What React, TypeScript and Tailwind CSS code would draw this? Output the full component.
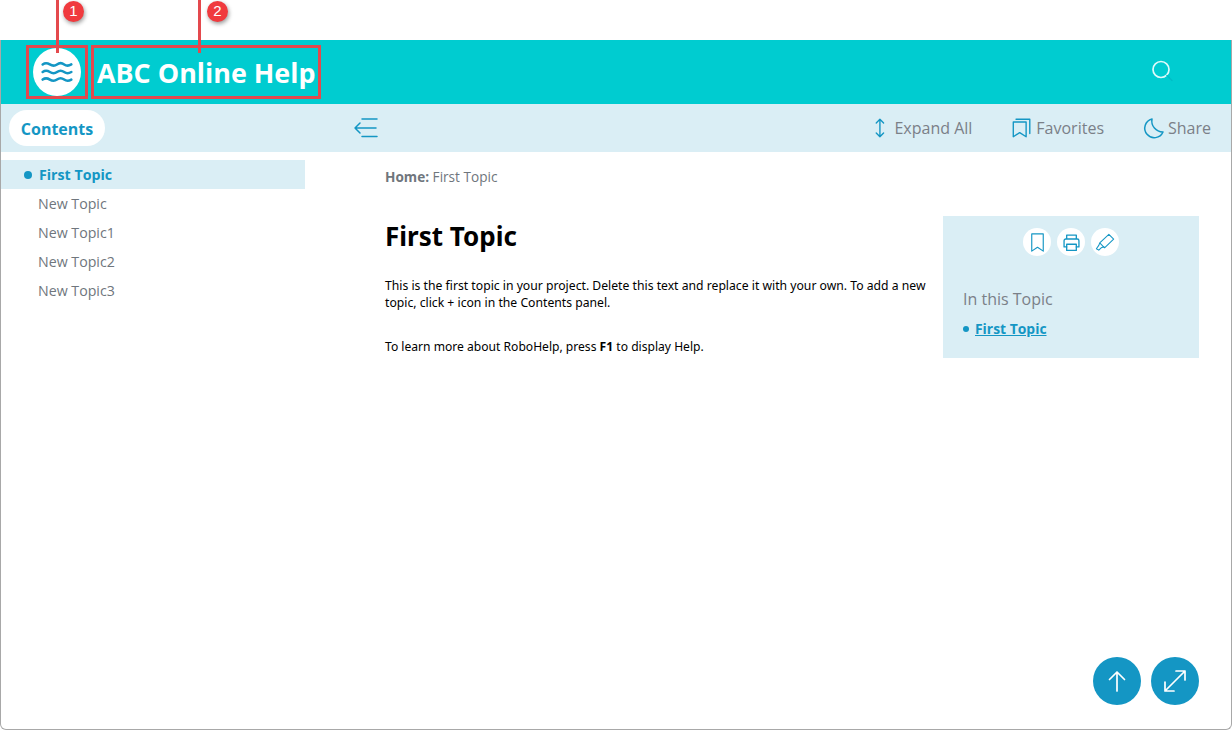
import React from "react";

const Blue = "#1496c4";

function Waves() {
  const d = (y: number) => `M2 ${y}c3-2.2 5-2.2 8.500 0s5.500 2.200 8.500 0 5.500-2.200 8.500 0 5 2.200 8.500 0`;
  return (
    <svg width="32" height="24" viewBox="0 0 38 28" fill="none" stroke={Blue} strokeWidth="3" strokeLinecap="round">
      <path d={d(5)} />
      <path d={d(14)} />
      <path d={d(23)} />
    </svg>
  );
}

function Stroke({ size, children, color = Blue, sw = 1.5, vb = 24 }: { size: number; children: React.ReactNode; color?: string; sw?: number; vb?: number }) {
  return (
    <svg width={size} height={size} viewBox={`0 0 ${vb} ${vb}`} fill="none" stroke={color} strokeWidth={sw} strokeLinecap="round" strokeLinejoin="round">
      {children}
    </svg>
  );
}

function Tool({ icon, label, className }: { icon: React.ReactNode; label: string; className?: string }) {
  return (
    <div className={`flex items-center text-base text-[#7a8088] ${className ?? ""}`}>
      {icon}
      <span>{label}</span>
    </div>
  );
}

function RoundIcon({ children }: { children: React.ReactNode }) {
  return <div className="w-7 h-7 rounded-full bg-white flex items-center justify-center">{children}</div>;
}

export default function App() {
  return (
    <div className="relative w-[1232px] h-[730px] bg-white overflow-hidden font-['Open_Sans','Noto_Sans',sans-serif]">
      <div className="absolute left-0 right-0 top-[40px] bottom-0 border-x border-b border-[#a8a8a8] rounded-b-[6px] pointer-events-none z-10" />
      <div className="h-10" />
      <header className="h-16 bg-[#00ccd0] flex items-center pl-[33px] pr-[58px]">
        <div className="w-12 h-12 rounded-full bg-white flex items-center justify-center">
          <Waves />
        </div>
        <div className="ml-4 text-[26.9px] font-bold text-white leading-none pt-[2px]">ABC Online Help</div>
        <div className="ml-auto -mt-[2px]">
          <svg width="24" height="24" viewBox="0 0 24 24" fill="none" strokeLinecap="round">
            <circle cx="11" cy="10.500" r="8" stroke="#dffafa" strokeWidth="1.7" />
            <path d="M17 16.500l5 5" stroke="#00bcc6" strokeWidth="1.500" />
          </svg>
        </div>
      </header>
      <div className="h-12 bg-[#daeef5] flex items-center pl-[9px] pr-[21px]">
        <div className="w-[96px] h-9 rounded-full bg-white flex items-center justify-center pt-[2px] text-base font-bold text-[#1496c4]">Contents</div>
        <div className="ml-[248px]">
          <svg width="26" height="22" viewBox="0 0 26 22" fill="none" stroke={Blue} strokeWidth="1.500" strokeLinecap="round" strokeLinejoin="round">
            <path d="M9 2h15M9 19.500h15M2 11h21M7 6l-5 5 5 5" />
          </svg>
        </div>
        <div className="ml-auto flex items-center">
          <Tool
            icon={
              <span className="w-[22px] flex justify-center mr-[4px]">
                <Stroke size={22}>
                  <path d="M13 2.500v19M9 6.500l4-4 4 4M9 17.500l4 4 4-4" />
                </Stroke>
              </span>
            }
            label="Expand All"
          />
          <Tool
            className="ml-[39px]"
            icon={
              <span className="mr-[3px]">
                <Stroke size={22}>
                  <path d="M2.500 5.500h14v16l-7-4.500-7 4.500zM5.500 2.500h15v15.500" />
                </Stroke>
              </span>
            }
            label="Favorites"
          />
          <Tool
            className="ml-[38px]"
            icon={
              <span className="mr-[2px]">
                <Stroke size={24}>
                  <path d="M10 3A9.500 9.500 0 1 0 21 16 11 11 0 0 1 10 3z" />
                </Stroke>
              </span>
            }
            label="Share"
          />
        </div>
      </div>
      <div className="flex">
        <aside className="w-[305px] pt-2 text-[14.2px] text-[#6f767d]">
          <div className="h-[29px] bg-[#daeef5] flex items-center pl-[24px] font-bold text-[#1496c4]">
            <span className="w-2 h-2 rounded-full bg-[#1496c4] mr-[7px]" />
            First Topic
          </div>
          {["New Topic", "New Topic1", "New Topic2", "New Topic3"].map((t) => (
            <div key={t} className="h-[29px] flex items-center pl-[38px]">{t}</div>
          ))}
        </aside>
        <main className="flex-1 pl-[80px] pr-[33px]">
          <div className="pt-4 h-[64px] text-[13.6px] leading-[18px] text-[#6f767d]">
            <b>Home:</b> First Topic
          </div>
          <div className="flex items-start">
            <div className="w-[558px] font-['Noto_Sans','Open_Sans',sans-serif] text-black text-[12.2px] leading-[17px]">
              <h1 className="text-[26px] leading-[38px] font-bold mt-[1px] mb-[22px]">First Topic</h1>
              <p className="mb-[27px]">
                This is the first topic in your project. Delete this text and replace it with your own. To add a new topic, click + icon in the Contents panel.
              </p>
              <p className="text-[12.1px]">
                To learn more about RoboHelp, press <b>F1</b> to display Help.
              </p>
            </div>
            <div className="w-[256px] h-[142px] bg-[#daeef5] px-5 pt-3">
              <div className="flex justify-center gap-[6px]">
                <RoundIcon>
                  <Stroke size={23} sw={1.200}>
                    <path d="M6 3h12v18l-6-4-6 4z" />
                  </Stroke>
                </RoundIcon>
                <RoundIcon>
                  <Stroke size={21} sw={1.500}>
                    <path d="M6.500 8V3.500h11V8M6.500 17H3.500v-7a2 2 0 0 1 2-2h13a2 2 0 0 1 2 2v7h-3" />
                    <path d="M6.500 14h11v7h-11z" />
                  </Stroke>
                </RoundIcon>
                <RoundIcon>
                  <Stroke size={23} sw={1.100}>
                    <path d="M15.500 3.500l5 5-9.500 9-5-5zM6 12.500l-1 2.500-2.500 3.500 2.500 1.500 2.500-2.500 3-1" />
                  </Stroke>
                </RoundIcon>
              </div>
              <div className="mt-[31px] text-base leading-[24px] text-[#7a8088]">In this Topic</div>
              <div className="mt-[9px] flex items-center text-[13.9px] font-bold text-[#1496c4] leading-[18px]">
                <span className="w-[6px] h-[6px] rounded-full bg-[#1496c4] mr-[6px]" />
                <span className="underline">First Topic</span>
              </div>
            </div>
          </div>
        </main>
      </div>

      {/* floating buttons */}
      <div className="absolute left-[1093px] top-[657px] flex gap-[10px]">
        <div className="w-12 h-12 rounded-full bg-[#1496c4] flex items-center justify-center">
          <Stroke size={24} color="#ffffff" sw={1.700}>
            <path d="M12 22V3M4.500 10.500 12 3l7.500 7.500" />
          </Stroke>
        </div>
        <div className="w-12 h-12 rounded-full bg-[#1496c4] flex items-center justify-center">
          <Stroke size={24} color="#ffffff" sw={1.700}>
            <path d="M2 22 22 2M13 2h9v9M2 13v9h9" />
          </Stroke>
        </div>
      </div>

      {/* annotations */}
      <div className="absolute left-[26px] top-[45px] w-[62px] h-[54px] border-[3px] border-[#e4494d] z-20" />
      <div className="absolute left-[91px] top-[45px] w-[230px] h-[54px] border-[3px] border-[#e4494d] z-20" />
      <div className="absolute left-[56px] top-0 w-[3px] h-[53px] bg-[#e4494d] z-20" />
      <div className="absolute left-[198px] top-0 w-[3px] h-[53px] bg-[#e4494d] z-20" />
      <div className="absolute left-[63px] top-[1px] w-[21px] h-[21px] rounded-full bg-[#f03a3e] shadow-[1px_2px_4px_rgba(0,0,0,0.4)] text-white text-[15px] flex items-center justify-center font-['Liberation_Sans',sans-serif] z-20">1</div>
      <div className="absolute left-[207px] top-[1px] w-[21px] h-[21px] rounded-full bg-[#f03a3e] shadow-[1px_2px_4px_rgba(0,0,0,0.4)] text-white text-[15px] flex items-center justify-center font-['Liberation_Sans',sans-serif] z-20">2</div>
    </div>
  );
}
